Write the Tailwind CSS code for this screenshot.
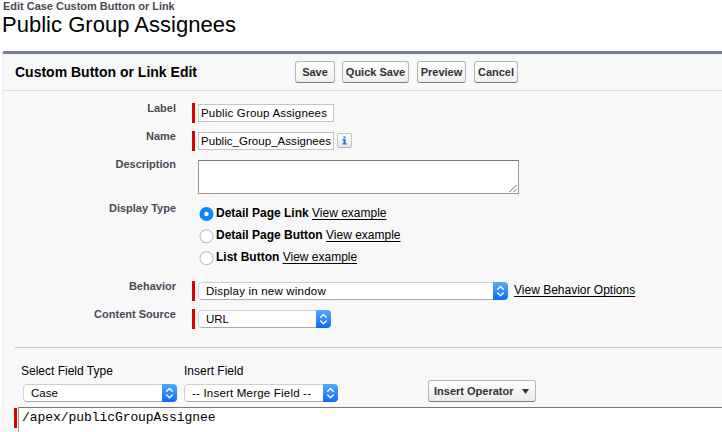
<!DOCTYPE html>
<html lang="en">
<head>
<meta charset="utf-8">
<title>Public Group Assignees</title>
<script src="https://cdn.jsdelivr.net/npm/@tailwindcss/browser@4"></script>
</head>
<body class="w-[722px] h-[432px] overflow-hidden bg-white text-black font-['Liberation_Sans',Arial,sans-serif] text-[12px] leading-[14px] whitespace-nowrap">
<svg class="hidden">
  <symbol id="arrows" viewBox="0 0 15 18"><path d="M4.7 7.3 7.5 4.5l2.8 2.8M4.7 10.9l2.8 2.8 2.8-2.8" fill="none" stroke="#fff" stroke-width="1.4" stroke-linecap="round" stroke-linejoin="round"/></symbol>
</svg>
<header class="h-[51px]">
  <div class="pl-[3px] h-[13px] text-[11px] leading-[13px] font-bold text-[#4a4a56] tracking-[-0.02px]">Edit Case Custom Button or Link</div>
  <h1 class="pl-[2px] text-[22px] leading-[24px] tracking-[0.02px]">Public Group Assignees</h1>
</header>
<main class="ml-[2px] h-[381px] border-t-[3px] border-t-[#747e96] border-l border-l-[#eaeaea] rounded-tl-[3px] bg-[#f8f8f8]">
  <div class="h-[37px] flex items-center pl-[12px] border-b border-[#dbdbdb]">
    <h2 class="w-[280px] text-[14px] font-bold">Custom Button or Link Edit</h2>
    <div class="flex gap-[7px] text-[11px] font-bold text-[#333]">
      <button class="w-[40px] h-[22px] rounded-[3px] border border-[#b5b5b5] border-b-[#7f7f7f] bg-linear-to-b from-white to-[#f0f0f0]">Save</button>
      <button class="w-[67px] h-[22px] rounded-[3px] border border-[#b5b5b5] border-b-[#7f7f7f] bg-linear-to-b from-white to-[#f0f0f0]">Quick Save</button>
      <button class="ml-px w-[49px] h-[22px] rounded-[3px] border border-[#b5b5b5] border-b-[#7f7f7f] bg-linear-to-b from-white to-[#f0f0f0]">Preview</button>
      <button class="ml-px w-[44px] h-[22px] rounded-[3px] border border-[#b5b5b5] border-b-[#7f7f7f] bg-linear-to-b from-white to-[#f0f0f0]">Cancel</button>
    </div>
  </div>
  <section class="h-[256px] pt-[12px]">
    <div class="h-[28px] flex">
      <div class="w-[173px] -mt-[2px] text-right text-[11px] font-bold text-[#4a4a56]">Label</div>
      <div class="ml-[16px] w-[3px] h-[20px] bg-[#d90000]"></div>
      <div class="ml-[3px] mt-px w-[136px] h-[18px] border border-[#c4c4c4] bg-white pl-[2px] text-[11.5px] leading-[17px]"><span class="tracking-[0.18px]">Public Group Assignees</span></div>
    </div>
    <div class="h-[28px] flex">
      <div class="w-[173px] -mt-[2px] text-right text-[11px] font-bold text-[#4a4a56]">Name</div>
      <div class="ml-[16px] w-[3px] h-[20px] bg-[#d90000]"></div>
      <div class="ml-[3px] mt-px w-[136px] h-[18px] border border-[#c4c4c4] bg-white pl-[2px] text-[11.5px] leading-[17px]"><span class="tracking-[0.04px]">Public_Group_Assignees</span></div>
      <div class="ml-[3px] mt-[2px] w-[15px] h-[15px] rounded-[2px] border border-[#c3c7cb] border-b-[#a9adb1] bg-linear-to-b from-white to-[#e4e8ec] flex justify-center">
        <svg class="w-[13px] h-[13px]" viewBox="0 0 13 13" fill="#1670dd"><path d="M5.5 2.5h2v1.7h-2zM4.5 5h3v4.3h1v1.2h-4V9.3h1V6.2h-1z"/></svg>
      </div>
    </div>
    <div class="h-[44px] flex">
      <div class="w-[173px] -mt-[2px] text-right text-[11px] font-bold text-[#4a4a56]">Description</div>
      <div class="ml-[22px] mt-px w-[321px] h-[34px] border border-[#999] border-t-[#777] bg-white flex justify-end items-end">
        <svg class="w-[9px] h-[9px]" viewBox="0 0 9 9" fill="none" stroke="#555" stroke-width=".9"><path d="M.5 8 7.5 1M4.5 8 7.5 5"/></svg>
      </div>
    </div>
    <div class="h-[78px] flex">
      <div class="w-[173px] -mt-[2px] text-right text-[11px] font-bold text-[#4a4a56]">Display Type</div>
      <div class="ml-[23px] -mt-px">
        <div class="h-[22px] flex">
          <svg class="mt-[5px] w-[15px] h-[15px]" viewBox="0 0 15 15"><circle cx="7.5" cy="7" r="7" fill="#0b87fb"/><circle cx="7.5" cy="7" r="2.2" fill="#fff"/></svg>
          <div class="ml-[2px] mt-[4px]"><b>Detail Page Link</b> <a class="underline underline-offset-2">View example</a></div>
        </div>
        <div class="h-[22px] flex">
          <svg class="mt-[5px] w-[15px] h-[15px]" viewBox="0 0 15 15"><circle cx="7.5" cy="7.3" r="6.5" fill="#fff" stroke="#b5b5b5"/></svg>
          <div class="ml-[2px] mt-[4px]"><b>Detail Page Button</b> <a class="underline underline-offset-2">View example</a></div>
        </div>
        <div class="h-[22px] flex">
          <svg class="mt-[5px] w-[15px] h-[15px]" viewBox="0 0 15 15"><circle cx="7.5" cy="7.3" r="6.5" fill="#fff" stroke="#b5b5b5"/></svg>
          <div class="ml-[2px] mt-[4px]"><b>List Button</b> <a class="underline underline-offset-2">View example</a></div>
        </div>
      </div>
    </div>
    <div class="h-[28px] flex">
      <div class="w-[173px] -mt-[2px] text-right text-[11px] font-bold text-[#4a4a56]">Behavior</div>
      <div class="ml-[16px] w-[3px] h-[20px] bg-[#d90000]"></div>
      <div class="ml-[3px] mt-px w-[310px] h-[18px] flex rounded-[4px] overflow-hidden bg-white">
        <div class="flex-1 border border-[#cfcfcf] border-b-[#aaa] border-r-0 rounded-l-[4px] pl-[7px] text-[11.5px] leading-[17px]"><span class="tracking-[0.2px]">Display in new window</span></div>
        <svg class="w-[15px] h-[18px] bg-linear-to-b from-[#52a9fb] to-[#0a6bfa]"><use href="#arrows"/></svg>
      </div>
      <a class="ml-[6px] mt-[2px] underline underline-offset-2">View Behavior Options</a>
    </div>
    <div class="h-[28px] flex">
      <div class="w-[173px] -mt-[2px] text-right text-[11px] font-bold text-[#4a4a56]">Content Source</div>
      <div class="ml-[16px] w-[3px] h-[20px] bg-[#d90000]"></div>
      <div class="ml-[3px] mt-px w-[133px] h-[18px] flex rounded-[4px] overflow-hidden bg-white">
        <div class="flex-1 border border-[#cfcfcf] border-b-[#aaa] border-r-0 rounded-l-[4px] pl-[7px] text-[11.5px] leading-[17px]"><span>URL</span></div>
        <svg class="w-[15px] h-[18px] bg-linear-to-b from-[#52a9fb] to-[#0a6bfa]"><use href="#arrows"/></svg>
      </div>
    </div>
  </section>
  <section class="ml-[12px] border-t border-[#c9c9c9] h-[60px] flex">
    <div class="ml-[6px] w-[163px] pt-[16px]">
      <div>Select Field Type</div>
      <div class="ml-[2px] mt-[6px] w-[154px] h-[18px] flex rounded-[4px] overflow-hidden bg-white">
        <div class="flex-1 border border-[#cfcfcf] border-b-[#aaa] border-r-0 rounded-l-[4px] pl-[7px] text-[11.5px] leading-[17px]">Case</div>
        <svg class="w-[15px] h-[18px] bg-linear-to-b from-[#52a9fb] to-[#0a6bfa]"><use href="#arrows"/></svg>
      </div>
    </div>
    <div class="w-[154px] pt-[16px]">
      <div>Insert Field</div>
      <div class="mt-[6px] h-[18px] flex rounded-[4px] overflow-hidden bg-white">
        <div class="flex-1 border border-[#cfcfcf] border-b-[#aaa] border-r-0 rounded-l-[4px] pl-[7px] text-[11.5px] leading-[17px]"><span class="tracking-[0.2px]">-- Insert Merge Field --</span></div>
        <svg class="w-[15px] h-[18px] bg-linear-to-b from-[#52a9fb] to-[#0a6bfa]"><use href="#arrows"/></svg>
      </div>
    </div>
    <button class="ml-[90px] mt-[32px] w-[108px] h-[22px] rounded-[3px] border border-[#b5b5b5] border-b-[#7f7f7f] bg-linear-to-b from-white to-[#ebebeb] flex items-center pl-[5px] text-[11px] font-bold text-[#333]">
      <span class="w-[88px] text-left">Insert Operator</span>
      <svg class="w-[7px] h-[5px]" viewBox="0 0 7 5"><path d="M0 0h7L3.5 5z" fill="#333"/></svg>
    </button>
  </section>
  <section class="ml-[11px] h-[25px] flex">
    <div class="w-[3px] h-[20px] mt-px bg-[#d90000]"></div>
    <div class="ml-px flex-1 h-[40px] border-t border-l border-t-[#777] border-l-[#999] bg-white pl-[3px] pt-[3px] font-['Liberation_Mono','Courier_New',monospace] text-[13px] leading-[14px]"><span class="tracking-[-0.06px]">/apex/publicGroupAssignee</span></div>
  </section>
</main>
</body>
</html>
